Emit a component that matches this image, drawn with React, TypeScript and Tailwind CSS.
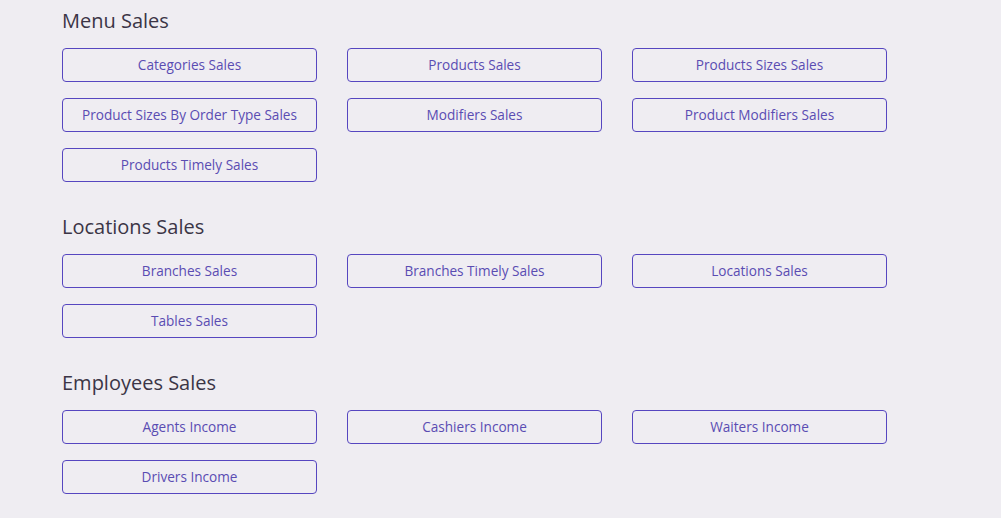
const sections = [
  {
    title: "Menu Sales",
    items: [
      "Categories Sales",
      "Products Sales",
      "Products Sizes Sales",
      "Product Sizes By Order Type Sales",
      "Modifiers Sales",
      "Product Modifiers Sales",
      "Products Timely Sales",
    ],
  },
  {
    title: "Locations Sales",
    items: ["Branches Sales", "Branches Timely Sales", "Locations Sales", "Tables Sales"],
  },
  {
    title: "Employees Sales",
    items: ["Agents Income", "Cashiers Income", "Waiters Income", "Drivers Income"],
  },
];

export default function App() {
  return (
    <div
      className="min-h-screen bg-[#efedf2] px-[62px] pt-[7px] pb-6"
      style={{ fontFamily: '"Open Sans", "Liberation Sans", sans-serif' }}
    >
      <div className="flex flex-col gap-[31px]">
        {sections.map((section) => (
          <section key={section.title}>
            <h2 className="text-[20px] leading-[28px] text-[#3b3546] mb-[13px]">{section.title}</h2>
            <div className="grid grid-cols-[255px_255px_255px] gap-x-[30px] gap-y-[16px]">
              {section.items.map((item) => (
                <button
                  key={item}
                  className="h-[34px] rounded-[4px] border border-[#5646c0] text-[13.6px] text-[#5a4cb2] bg-transparent"
                >
                  {item}
                </button>
              ))}
            </div>
          </section>
        ))}
      </div>
    </div>
  );
}
